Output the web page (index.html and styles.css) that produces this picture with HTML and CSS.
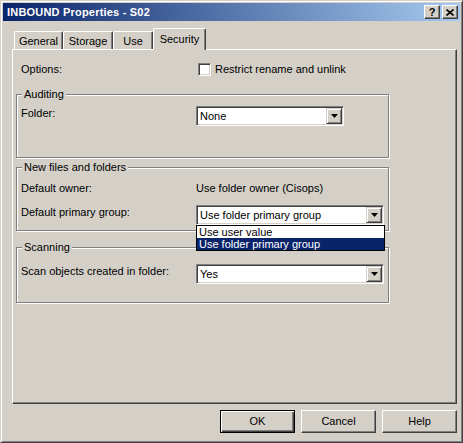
FILE: index.html
```html
<!DOCTYPE html>
<html>
<head>
<meta charset="utf-8">
<link rel="stylesheet" href="styles.css">
</head>
<body>
<div class="window">
  <div class="titlebar">
    <span class="title">INBOUND Properties - S02</span>
    <span class="tbtn tbtn-help">?</span>
    <span class="tbtn tbtn-close"><svg width="8" height="7" viewBox="0 0 8 7"><path d="M0.5,0.5 L7.5,6.5 M7.5,0.5 L0.5,6.5" stroke="#000" stroke-width="1.6" fill="none"/></svg></span>
  </div>
  <div class="tabs">
    <div class="tab tab-general">General</div>
    <div class="tab tab-storage">Storage</div>
    <div class="tab tab-use">Use</div>
    <div class="tab tab-security active">Security</div>
  </div>
  <div class="panel">
    <div class="row row-options">
      <span class="label">Options:</span>
      <span class="checkbox"></span>
      <span class="cb-label">Restrict rename and unlink</span>
    </div>

    <div class="group group-audit">
      <div class="legend">Auditing</div>
      <div class="row row-audit">
        <span class="glabel">Folder:</span>
        <div class="combo combo-short">
          <span class="combo-text">None</span>
          <span class="combo-btn"><svg width="7" height="4" viewBox="0 0 7 4"><path d="M0,0 H7 L3.5,4 Z" fill="#000"/></svg></span>
        </div>
      </div>
    </div>

    <div class="group group-new">
      <div class="legend">New files and folders</div>
      <div class="row row-owner">
        <span class="glabel">Default owner:</span>
        <span class="value">Use folder owner (Cisops)</span>
      </div>
      <div class="row row-pgroup">
        <span class="glabel">Default primary group:</span>
        <div class="combo combo-long">
          <span class="combo-text">Use folder primary group</span>
          <span class="combo-btn"><svg width="7" height="4" viewBox="0 0 7 4"><path d="M0,0 H7 L3.5,4 Z" fill="#000"/></svg></span>
          <div class="dropdown">
            <div class="ditem">Use user value</div>
            <div class="ditem selected">Use folder primary group</div>
          </div>
        </div>
      </div>
    </div>

    <div class="group group-scan">
      <div class="legend">Scanning</div>
      <div class="row row-scan">
        <span class="glabel">Scan objects created in folder:</span>
        <div class="combo combo-long">
          <span class="combo-text">Yes</span>
          <span class="combo-btn"><svg width="7" height="4" viewBox="0 0 7 4"><path d="M0,0 H7 L3.5,4 Z" fill="#000"/></svg></span>
        </div>
      </div>
    </div>
  </div>
  <div class="buttons">
    <div class="btn btn-default">OK</div>
    <div class="btn">Cancel</div>
    <div class="btn">Help</div>
  </div>
</div>
</body>
</html>
```
FILE: styles.css
```css
html, body {
  margin: 0;
  padding: 0;
  background: #d4d0c8;
}
body {
  font-family: "Liberation Sans", Arial, sans-serif;
  font-size: 11px;
  line-height: 13px;
  color: #000;
}
.window {
  width: 463px;
  height: 443px;
  box-sizing: border-box;
  background: #d4d0c8;
  border: 1px solid;
  border-color: #d4d0c8 #404040 #404040 #d4d0c8;
  box-shadow: inset 1px 1px 0 #fff, inset -1px -1px 0 #808080;
  padding: 2px;
}
.titlebar {
  height: 18px;
  display: flex;
  align-items: center;
  padding-left: 4px;
  background: linear-gradient(to right, #0a246a, #a6caf0);
}
.title {
  flex: 1;
  color: #fff;
  font-weight: bold;
  font-size: 11px;
  letter-spacing: 0.2px;
}
.tbtn {
  width: 16px;
  height: 14px;
  box-sizing: border-box;
  background: #d4d0c8;
  border: 1px solid;
  border-color: #fff #404040 #404040 #fff;
  box-shadow: inset -1px -1px 0 #808080;
  display: flex;
  align-items: center;
  justify-content: center;
  font-weight: bold;
  font-size: 11px;
  line-height: 11px;
  margin-right: 2px;
}
.tabs {
  display: flex;
  align-items: flex-end;
  height: 21px;
  margin: 7px 0 0 11px;
}
.tab {
  height: 18px;
  box-sizing: border-box;
  border-top: 1px solid #fff;
  border-left: 1px solid #fff;
  border-right: 1px solid #404040;
  box-shadow: inset -1px 0 0 #808080;
  border-radius: 2px 2px 0 0;
  display: flex;
  align-items: center;
  justify-content: center;
  padding-top: 1px;
}
.tab-general { width: 49px; }
.tab-storage { width: 50px; }
.tab-use { width: 40px; }
.tab-security { width: 53px; }
.tab.active {
  height: 22px;
  margin-bottom: -1px;
  position: relative;
  z-index: 1;
  background: #d4d0c8;
  align-items: flex-start;
  padding-top: 4px;
}
.panel {
  margin-left: 9px;
  width: 445px;
  height: 355px;
  box-sizing: border-box;
  border: 1px solid;
  border-color: #fff #404040 #404040 #fff;
  box-shadow: inset -1px -1px 0 #808080;
  padding: 12px 0 0 3px;
}
.row {
  display: flex;
  align-items: flex-start;
}
.row-options {
  height: 14px;
  align-items: center;
}
.label {
  width: 180px;
  box-sizing: border-box;
  padding-left: 5px;
}
.checkbox {
  width: 13px;
  height: 13px;
  box-sizing: border-box;
  margin-left: 2px;
  background: #fff;
  border: 1px solid;
  border-color: #808080 #fff #fff #808080;
  box-shadow: inset 1px 1px 0 #404040, inset -1px -1px 0 #d4d0c8;
}
.cb-label {
  margin-left: 4px;
}
.group {
  width: 373px;
  box-sizing: border-box;
  border: 1px solid #808080;
  box-shadow: inset 1px 1px 0 #fff, 1px 1px 0 #fff;
}
.legend {
  width: fit-content;
  margin: -7px 0 0 5px;
  padding: 0 2px;
  background: #d4d0c8;
  line-height: 13px;
}
.glabel {
  width: 179px;
  box-sizing: border-box;
  padding-left: 4px;
  padding-top: 1px;
}
.group-audit { margin-top: 18px; padding-bottom: 31px; }
.row-audit { margin-top: 5px; }
.group-new { margin-top: 9px; padding-bottom: 5px; }
.row-owner { margin-top: 8px; }
.row-owner .glabel { padding-top: 0; }
.row-pgroup { margin-top: 10px; }
.group-scan { margin-top: 16px; padding-bottom: 18px; }
.row-scan { margin-top: 10px; }

.combo {
  position: relative;
  height: 20px;
  box-sizing: border-box;
  background: #fff;
  border: 1px solid;
  border-color: #808080 #fff #fff #808080;
  box-shadow: inset 1px 1px 0 #404040, inset -1px -1px 0 #d4d0c8;
  padding: 1px;
  display: flex;
  align-items: center;
}
.combo-short { width: 148px; }
.combo-long { width: 188px; }
.combo-text {
  flex: 1;
  padding-left: 2px;
  padding-top: 1px;
}
.combo-btn {
  width: 16px;
  height: 16px;
  box-sizing: border-box;
  background: #d4d0c8;
  border: 1px solid;
  border-color: #d4d0c8 #404040 #404040 #d4d0c8;
  box-shadow: inset 1px 1px 0 #fff, inset -1px -1px 0 #808080;
  display: flex;
  align-items: center;
  justify-content: center;
}
.dropdown {
  position: absolute;
  z-index: 2;
  left: -1px;
  top: 19px;
  width: 189px;
  box-sizing: border-box;
  background: #fff;
  border: 1px solid #000;
}
.ditem {
  height: 12px;
  line-height: 12px;
  padding-left: 2px;
}
.ditem.selected {
  background: #0a246a;
  color: #fff;
}
.buttons {
  width: 445px;
  margin: 6px 0 0 9px;
  display: flex;
  justify-content: flex-end;
  gap: 6px;
}
.btn {
  width: 75px;
  height: 23px;
  box-sizing: border-box;
  border: 1px solid;
  border-color: #fff #404040 #404040 #fff;
  box-shadow: inset -1px -1px 0 #808080;
  display: flex;
  align-items: center;
  justify-content: center;
}
.btn-default {
  border: 1px solid #000;
  box-shadow: inset 1px 1px 0 #fff, inset -1px -1px 0 #404040, inset -2px -2px 0 #808080;
}
```
